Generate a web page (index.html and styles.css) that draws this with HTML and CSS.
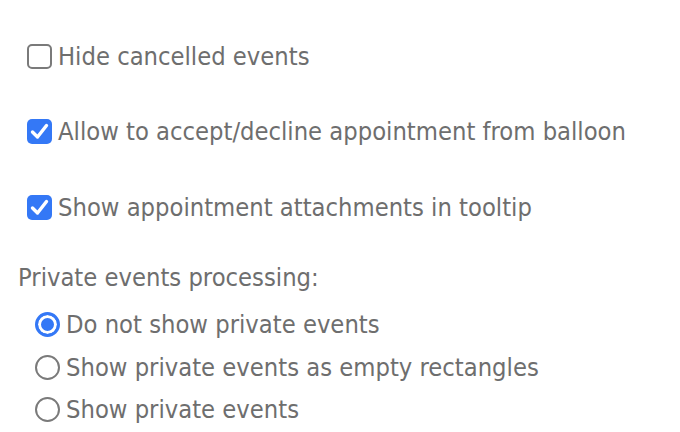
FILE: index.html
```html
<!DOCTYPE html>
<html lang="en">
  <head>
    <link rel="stylesheet" href="styles.css">
  </head>
  <body>
    <div class="options">
      <label class="check-row">
        <input type="checkbox" />
        <span>Hide cancelled events</span>
      </label>
      <label class="check-row">
        <input type="checkbox" checked />
        <span>Allow to accept/decline appointment from balloon</span>
      </label>
      <label class="check-row">
        <input type="checkbox" checked />
        <span>Show appointment attachments in tooltip</span>
      </label>

      <p class="group-title">Private events processing:</p>
      <div class="radio-group">
        <label class="radio-row">
          <input type="radio" name="private" checked />
          <span>Do not show private events</span>
        </label>
        <label class="radio-row">
          <input type="radio" name="private" />
          <span>Show private events as empty rectangles</span>
        </label>
        <label class="radio-row">
          <input type="radio" name="private" />
          <span>Show private events</span>
        </label>
      </div>
    </div>
  </body>
</html>
```

FILE: styles.css
```css
body {
  margin: 0;
  background: #fff;
  font-family: "DejaVu Sans Condensed", "DejaVu Sans", sans-serif;
  font-size: 25.3px;
  color: #6e6e6e;
}

.options {
  display: flex;
  flex-direction: column;
  padding: 41px 0 0 18px;
}

.check-row {
  display: flex;
  align-items: center;
  height: 30px;
  margin: 0 0 45.5px 9px;
  gap: 6px;
}

.check-row input {
  appearance: none;
  -webkit-appearance: none;
  margin: 0;
  width: 25px;
  height: 25px;
  border: 2px solid #7a7a7a;
  border-radius: 5px;
  box-sizing: border-box;
  background: #fff;
  flex: none;
}

.check-row input:checked {
  border: none;
  background: #3478f6 url("data:image/svg+xml,%3Csvg xmlns='http://www.w3.org/2000/svg' viewBox='0 0 25 25'%3E%3Cpath d='M5.5 13 L10.5 18 L19.5 6.5' fill='none' stroke='white' stroke-width='3.4' stroke-linecap='round' stroke-linejoin='round'/%3E%3C/svg%3E") no-repeat center / 100% 100%;
}

.group-title {
  margin: -5px 0 0;
  height: 30px;
  line-height: 30px;
}

.radio-group {
  display: flex;
  flex-direction: column;
  margin: 11px 0 0 17px;
}

.radio-row {
  display: flex;
  align-items: center;
  height: 42.5px;
  gap: 6px;
}

.radio-row input {
  appearance: none;
  -webkit-appearance: none;
  margin: 0;
  width: 25px;
  height: 25px;
  border: 2px solid #7a7a7a;
  border-radius: 50%;
  box-sizing: border-box;
  background: #fff;
  flex: none;
}

.radio-row input:checked {
  border: 3px solid #3478f6;
  box-shadow: inset 0 0 0 3px #fff;
  background: #3478f6;
}
```
